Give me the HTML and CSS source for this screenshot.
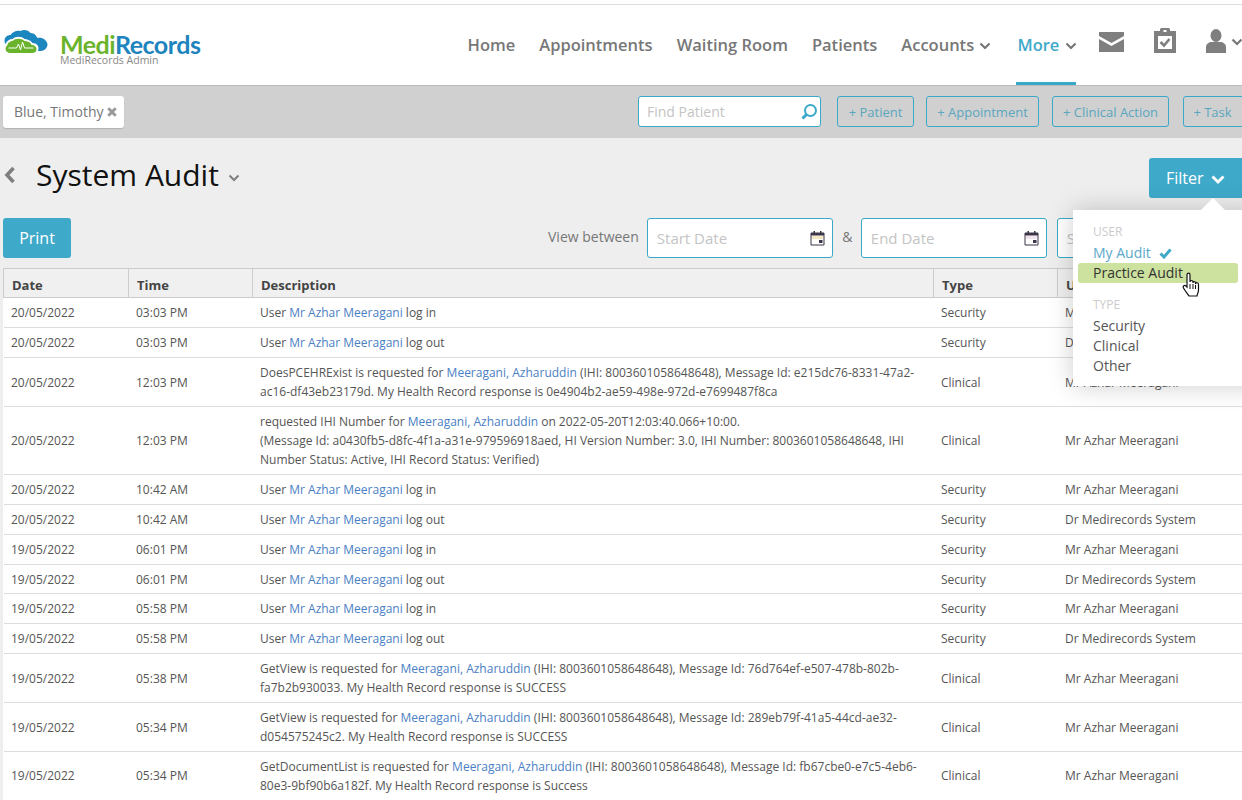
FILE: index.html
```html
<!DOCTYPE html>
<html>
<head>
    <title>System Audit - MediRecords</title>
    <link rel="stylesheet" href="styles.css">
</head>
<body>
<div id="page">
    <header id="header">
        <div class="logo">
            <svg class="logo-cloud" width="48" height="26" viewBox="3.500 0 48 26">
                <path fill="#1c86bf" d="M4 12c0-4 3-6 6-6 2-3 6-5 10-4 3-2 8-1 10 2 4 0 6 3 7 5 5-1 9 2 10 6 0 4-3 7-7 7H32L8 17c-3-1-4-3-4-5z"/>
                <path fill="#fff" d="M5 15c1-3 4-5 7-5 3-3 9-3 12 0 2 0 6 1 8 4 4 0 6 3 6 5 0 4-3 6-6 6H10c-4 0-6-3-6-6 0-2 0-3 1-4z"/>
                <path fill="#6ab42d" d="M7 16c0-2 3-4 5-4 3-3 9-3 12 0 3 0 6 1 7 4 3 0 5 2 5 4 0 3-2 4-5 4H10c-3 0-5-2-5-4 0-2 1-3 2-4z"/>
                <path fill="none" stroke="#fff" stroke-width="1" d="M8 19h8l2-4 2 6 2-8 2 6h9"/>
            </svg>
            <div>
                <div class="logo-name"><span class="medi">Medi</span><span class="records">Records</span></div>
                <div class="logo-sub">MediRecords Admin</div>
            </div>
        </div>
        <nav class="nav">
            <a>Home</a>
            <a>Appointments</a>
            <a>Waiting Room</a>
            <a>Patients</a>
            <a>Accounts <svg class="chev" width="12" height="8" viewBox="0 0 12 8"><path d="M1.500 1.500 6 6l4.500-4.500" fill="none" stroke="#777" stroke-width="2.200"/></svg></a>
            <a class="active">More <svg class="chev" width="12" height="8" viewBox="0 0 12 8"><path d="M1.500 1.500 6 6l4.500-4.500" fill="none" stroke="#777" stroke-width="2.200"/></svg></a>
            <svg class="nav-mail" width="25" height="20" viewBox="0 0 25 20">
                <path fill="#7f7f7f" d="M0 0h25v4L12.500 11 0 4zM0 7l12.500 7L25 7v13H0z"/>
            </svg>
            <svg class="nav-clip" width="22" height="25" viewBox="0 0 22 25">
                <path fill="#7f7f7f" d="M0 3h6V1.500C6 .5 7 0 8 0h6c1 0 2 .5 2 1.500V3h6v22H0z"/>
                <path fill="#fff" d="M9.500 2h3v2h-3zM4 8h14v13H4z"/>
                <path fill="none" stroke="#7f7f7f" stroke-width="2.600" d="m6.500 14 3.500 3.500 5.500-6.500"/>
            </svg>
            <svg class="nav-user" width="20" height="24" viewBox="0 0 20 24">
                <ellipse fill="#7f7f7f" cx="10" cy="6.500" rx="5.500" ry="6.500"/>
                <path fill="#7f7f7f" d="M0 24v-6c0-3 3-5 6-5h8c3 0 6 2 6 5v6z"/>
            </svg>
            <svg class="chev nav-user-chev" width="12" height="8" viewBox="0 0 12 8"><path d="M1.500 1.500 6 6l4.500-4.500" fill="none" stroke="#777" stroke-width="2.200"/></svg>
        </nav>
    </header>

    <div id="toolbar">
        <div class="chip">Blue, Timothy
            <svg class="chip-x" width="10" height="10" viewBox="0 0 10 10"><path d="m1.300 1.300 7.400 7.400m0-7.400-7.400 7.400" stroke="#999" stroke-width="3"/></svg>
        </div>
        <div class="find">
            <span class="placeholder">Find Patient</span>
            <svg width="18" height="18" viewBox="0 0 18 18"><circle cx="10.500" cy="7.500" r="5.500" fill="none" stroke="#3aa9c9" stroke-width="2"/><path d="m6.500 11.500-4 4" stroke="#3aa9c9" stroke-width="3"/></svg>
        </div>
        <a class="tool-btn btn-patient">+ Patient</a>
        <a class="tool-btn btn-appt">+ Appointment</a>
        <a class="tool-btn btn-clinical">+ Clinical Action</a>
        <a class="tool-btn btn-task">+ Task</a>
    </div>

    <div id="content">
        <div class="title-row">
            <svg class="back" width="12" height="18" viewBox="0 0 12 18"><path d="M9.500 2 3 9l6.500 7" fill="none" stroke="#7f7f7f" stroke-width="3.600"/></svg>
            <h1>System Audit</h1>
            <svg class="title-chev" width="12" height="8" viewBox="0 0 12 8"><path d="M1.500 1.500 6 6l4.500-4.500" fill="none" stroke="#7f7f7f" stroke-width="2"/></svg>
            <button class="filter-btn">Filter <svg width="14" height="9" viewBox="0 0 14 9"><path d="M1.500 1.500 7 7l5.500-5.500" fill="none" stroke="#fff" stroke-width="2.800"/></svg></button>
        </div>
        <div class="action-row">
            <button class="print-btn">Print</button>
            <span class="view-label">View between</span>
            <div class="date-box date-start"><span class="placeholder">Start Date</span>
                <svg width="15" height="16" viewBox="0 0 15 16"><path fill="none" stroke="#3d3548" d="M1 3h13v12H1z"/><path fill="#3d3548" d="M1 3h13v2.500H1zM3.500 1h1.500v3H3.500zM10 1h1.500v3H10zM9 10h3.500v3H9z"/><path fill="#f7e8c4" d="M2 6h11v3H2z"/></svg>
            </div>
            <span class="amp">&amp;</span>
            <div class="date-box date-end"><span class="placeholder">End Date</span>
                <svg width="15" height="16" viewBox="0 0 15 16"><path fill="none" stroke="#3d3548" d="M1 3h13v12H1z"/><path fill="#3d3548" d="M1 3h13v2.500H1zM3.500 1h1.500v3H3.500zM10 1h1.500v3H10zM9 10h3.500v3H9z"/><path fill="#f3e3ee" d="M2 6h11v3H2z"/></svg>
            </div>
            <div class="date-box date-third"><span class="placeholder">Search</span></div>
        </div>

        <table id="audit">
            <colgroup>
                <col class="col-date"><col class="col-time"><col class="col-desc"><col class="col-type"><col class="col-user">
            </colgroup>
            <thead>
                <tr><th>Date</th><th>Time</th><th>Description</th><th>Type</th><th>User</th></tr>
            </thead>
            <tbody>
                <tr><td>20/05/2022</td><td>03:03 PM</td><td>User <a>Mr Azhar Meeragani</a> log in</td><td>Security</td><td>Mr Azhar Meeragani</td></tr>
                <tr><td>20/05/2022</td><td>03:03 PM</td><td>User <a>Mr Azhar Meeragani</a> log out</td><td>Security</td><td>Dr Medirecords System</td></tr>
                <tr><td>20/05/2022</td><td>12:03 PM</td><td>DoesPCEHRExist is requested for <a>Meeragani, Azharuddin</a> (IHI: 8003601058648648), Message Id: e215dc76-8331-47a2-ac16-df43eb23179d. My Health Record response is 0e4904b2-ae59-498e-972d-e7699487f8ca</td><td>Clinical</td><td>Mr Azhar Meeragani</td></tr>
                <tr><td>20/05/2022</td><td>12:03 PM</td><td>requested IHI Number for <a>Meeragani, Azharuddin</a> on 2022-05-20T12:03:40.066+10:00.<br>(Message Id: a0430fb5-d8fc-4f1a-a31e-979596918aed, HI Version Number: 3.0, IHI Number: 8003601058648648, IHI Number Status: Active, IHI Record Status: Verified)</td><td>Clinical</td><td>Mr Azhar Meeragani</td></tr>
                <tr><td>20/05/2022</td><td>10:42 AM</td><td>User <a>Mr Azhar Meeragani</a> log in</td><td>Security</td><td>Mr Azhar Meeragani</td></tr>
                <tr><td>20/05/2022</td><td>10:42 AM</td><td>User <a>Mr Azhar Meeragani</a> log out</td><td>Security</td><td>Dr Medirecords System</td></tr>
                <tr><td>19/05/2022</td><td>06:01 PM</td><td>User <a>Mr Azhar Meeragani</a> log in</td><td>Security</td><td>Mr Azhar Meeragani</td></tr>
                <tr><td>19/05/2022</td><td>06:01 PM</td><td>User <a>Mr Azhar Meeragani</a> log out</td><td>Security</td><td>Dr Medirecords System</td></tr>
                <tr><td>19/05/2022</td><td>05:58 PM</td><td>User <a>Mr Azhar Meeragani</a> log in</td><td>Security</td><td>Mr Azhar Meeragani</td></tr>
                <tr><td>19/05/2022</td><td>05:58 PM</td><td>User <a>Mr Azhar Meeragani</a> log out</td><td>Security</td><td>Dr Medirecords System</td></tr>
                <tr><td>19/05/2022</td><td>05:38 PM</td><td>GetView is requested for <a>Meeragani, Azharuddin</a> (IHI: 8003601058648648), Message Id: 76d764ef-e507-478b-802b-fa7b2b930033. My Health Record response is SUCCESS</td><td>Clinical</td><td>Mr Azhar Meeragani</td></tr>
                <tr><td>19/05/2022</td><td>05:34 PM</td><td>GetView is requested for <a>Meeragani, Azharuddin</a> (IHI: 8003601058648648), Message Id: 289eb79f-41a5-44cd-ae32-d054575245c2. My Health Record response is SUCCESS</td><td>Clinical</td><td>Mr Azhar Meeragani</td></tr>
                <tr><td>19/05/2022</td><td>05:34 PM</td><td>GetDocumentList is requested for <a>Meeragani, Azharuddin</a> (IHI: 8003601058648648), Message Id: fb67cbe0-e7c5-4eb6-80e3-9bf90b6a182f. My Health Record response is Success</td><td>Clinical</td><td>Mr Azhar Meeragani</td></tr>
            </tbody>
        </table>
    </div>

    <!-- filter dropdown, open over the table -->
    <div id="filter-menu">
        <div class="menu-label">USER</div>
        <div class="menu-item selected">My Audit
            <svg class="tick" width="13" height="11" viewBox="0 0 13 11"><path d="m1.500 5.500 3.500 3.500 6.500-7.500" fill="none" stroke="#3fa9c9" stroke-width="3"/></svg>
        </div>
        <div class="menu-item hovered">Practice Audit</div>
        <div class="menu-label type-label">TYPE</div>
        <div class="menu-item">Security</div>
        <div class="menu-item">Clinical</div>
        <div class="menu-item">Other</div>
    </div>
    <div id="menu-arrow"></div>
    <svg id="cursor" width="18" height="25" viewBox="0 0 18 25">
        <path fill="#fff" stroke="#111" stroke-width="1.200" d="M5 3C5 .5 8 .5 8 3V10C8 8 11 8 11 10V11C11 9 13.500 9 13.500 11V12C14 10 16.500 10.500 16.500 12.500V18C16.500 21 15 22 15 24H7C6 22 3 19 1.500 16 .5 14 2.500 12.500 4 14L5 15Z"/>
        <path stroke="#111" fill="none" d="M8 12v5M11 12v5M13.500 13v4"/>
    </svg>
</div>
</body>
</html>
```

FILE: styles.css
```css
html, body {
    margin: 0;
    padding: 0;
    overflow: hidden;
}

body {
    font-family: "Open Sans", sans-serif;
    background-color: #eee;
    color: #555;
}

#page {
    position: relative;
    width: 1242px;
    height: 800px;
    overflow: hidden;
}

/* header */
#header {
    display: flex;
    align-items: stretch;
    height: 80px;
    margin-top: 4px;
    border-top: 1px solid #ddd;
    border-bottom: 1px solid #bbb;
    background-color: #fff;
    box-shadow: 0 -4px 0 #fff;
}

.logo {
    display: flex;
    flex: 0 0 467.500px;
    padding-left: 4px;
    padding-top: 26px;
    box-sizing: border-box;
    gap: 8px;
}

.logo-cloud {
    margin-top: -2px;
}

.logo-name {
    font-family: "Lato", sans-serif;
    font-size: 25px;
    font-weight: 700;
    line-height: 26px;
    letter-spacing: -.5px;
}

.medi {
    color: #6ab42d;
}

.records {
    color: #1d84bd;
}

.logo-sub {
    margin-top: -3px;
    font-size: 10.500px;
    line-height: 12px;
    color: #888;
}

.nav {
    display: flex;
    align-items: stretch;
    gap: 24px;
    white-space: nowrap;
}

.nav a {
    display: block;
    padding-top: 27px;
    font-size: 16.500px;
    font-weight: 600;
    line-height: 26px;
    color: #777;
    box-sizing: border-box;
}

.nav .chev {
    margin-left: 1px;
    vertical-align: 1px;
}

.nav a.active {
    width: 60px;
    margin-left: 1px;
    padding-left: 1px;
    color: #3fa9c9;
    border-bottom: 3px solid #3aa9c9;
}

.nav-mail {
    flex: none;
    margin-top: 27px;
    margin-left: -1px;
}

.nav-clip {
    flex: none;
    margin-top: 23px;
    margin-left: 6px;
}

.nav-user {
    flex: none;
    margin-top: 24px;
    margin-left: 6px;
}

.nav .nav-user-chev {
    flex: none;
    margin: 33px 0 0 -19px;
}

/* grey bar with chip, search and quick actions */
#toolbar {
    display: flex;
    align-items: flex-start;
    height: 52px;
    padding: 10px 0 0 3px;
    background-color: #d0d0d0;
    box-sizing: border-box;
    white-space: nowrap;
}

.chip {
    width: 121px;
    height: 32px;
    flex: none;
    padding-left: 11px;
    box-sizing: border-box;
    font-size: 14px;
    line-height: 32px;
    color: #777;
    background-color: #fff;
    border-radius: 3px;
    box-shadow: 0 1px 1px rgba(0, 0, 0, .15);
}

.chip-x {
    vertical-align: 0;
}

.find {
    display: flex;
    align-items: center;
    justify-content: space-between;
    flex: none;
    width: 183px;
    height: 31px;
    margin-left: 514px;
    padding: 0 2px 0 8px;
    box-sizing: border-box;
    background-color: #fff;
    border: 1px solid #3aa9c9;
    border-radius: 3px;
}

.placeholder {
    font-size: 14px;
    color: #c4c4c4;
}

.date-box .placeholder {
    font-size: 15px;
}

.tool-btn {
    flex: none;
    display: block;
    height: 31px;
    box-sizing: border-box;
    text-align: center;
    font-size: 13px;
    line-height: 30px;
    color: #5aa6bf;
    border: 1px solid #3aa9c9;
    border-radius: 3px;
}

.btn-patient {
    width: 77px;
    margin-left: 16px;
}

.btn-appt {
    width: 113px;
    margin-left: 12px;
}

.btn-clinical {
    width: 117px;
    margin-left: 13px;
}

.btn-task {
    width: 79px;
    margin-left: 14px;
    padding-right: 20px;
}

/* page content */
#content {
    padding-left: 3px;
}

.title-row {
    display: flex;
    align-items: flex-start;
    height: 80px;
    white-space: nowrap;
}

.back {
    margin: 28px 0 0 1px;
    flex: none;
}

h1 {
    margin: 14px 0 0 20px;
    font-size: 30px;
    font-weight: 400;
    line-height: 46px;
    color: #111;
}

.title-chev {
    margin: 36px 0 0 9px;
}

.filter-btn {
    position: absolute;
    top: 158px;
    left: 1149px;
    width: 100px;
    height: 40px;
    padding: 0 0 0 17px;
    text-align: left;
    font-family: inherit;
    font-size: 16px;
    color: #fff;
    background-color: #3fa9c9;
    border: none;
    border-radius: 3px;
}

.filter-btn svg {
    margin-left: 3px;
}

.action-row {
    display: flex;
    align-items: flex-start;
    height: 50px;
    white-space: nowrap;
}

.print-btn {
    flex: none;
    width: 68px;
    height: 40px;
    padding: 0;
    font-family: inherit;
    font-size: 16px;
    color: #fff;
    background-color: #3fa9c9;
    border: none;
    border-radius: 3px;
}

.view-label {
    margin: 9px 0 0 477px;
    font-size: 14px;
    line-height: 20px;
    color: #777;
}

.date-box {
    display: flex;
    align-items: center;
    justify-content: space-between;
    flex: none;
    width: 186px;
    height: 40px;
    padding: 0 7px 0 9px;
    box-sizing: border-box;
    background-color: #fff;
    border: 1px solid #3aa9c9;
    border-radius: 3px;
}

.date-start {
    margin-left: 8px;
}

.amp {
    flex: none;
    width: 27px;
    margin-top: 9px;
    padding-left: 1px;
    text-align: center;
    font-size: 14px;
    line-height: 20px;
    color: #777;
}

.date-third {
    margin-left: 10px;
}

/* audit table */
#audit {
    width: 1291px;
    table-layout: fixed;
    border-collapse: collapse;
    font-size: 12px;
    line-height: 19px;
    background-color: #fff;
}

.col-date {
    width: 125px;
}

.col-time {
    width: 124px;
}

.col-desc {
    width: 681px;
}

.col-type {
    width: 124px;
}

.col-user {
    width: 237px;
}

#audit th {
    height: 29.300px;
    padding: 5px 8px 0;
    box-sizing: border-box;
    text-align: left;
    font-size: 13px;
    font-weight: 700;
    color: #444;
    background-color: #f0f0f0;
    border: 1px solid #ccc;
}

#audit td {
    padding: 5px 14px 4.900px 7.500px;
    color: #555;
    border-bottom: 1px solid #ddd;
}

#audit td a {
    color: #4a80c4;
}

/* filter menu */
#filter-menu {
    position: absolute;
    top: 210px;
    left: 1073px;
    width: 190px;
    height: 176px;
    padding-top: 13px;
    box-sizing: border-box;
    background-color: #fff;
    box-shadow: 0 0 24px rgba(0, 0, 0, .2);
    font-size: 14px;
    line-height: 20px;
}

.menu-label {
    padding-left: 20px;
    font-size: 12px;
    line-height: 18px;
    color: #ccc;
}

.type-label {
    margin-top: 13px;
    margin-bottom: 2px;
}

.menu-item {
    width: 160px;
    margin-left: 5px;
    padding-left: 15px;
    box-sizing: border-box;
    color: #555;
}

.menu-label + .menu-item {
    margin-top: 2px;
}

.menu-item.selected {
    color: #5aa9c9;
}

.menu-item.hovered {
    color: #333;
    background-color: #cde29e;
    border-radius: 3px;
}

.tick {
    margin-left: 5px;
    vertical-align: -1px;
}

#menu-arrow {
    position: absolute;
    top: 198px;
    left: 1201px;
    width: 0;
    height: 0;
    border-left: 12px solid transparent;
    border-right: 12px solid transparent;
    border-bottom: 12px solid #fff;
}

#cursor {
    position: absolute;
    top: 272px;
    left: 1182px;
}
```
